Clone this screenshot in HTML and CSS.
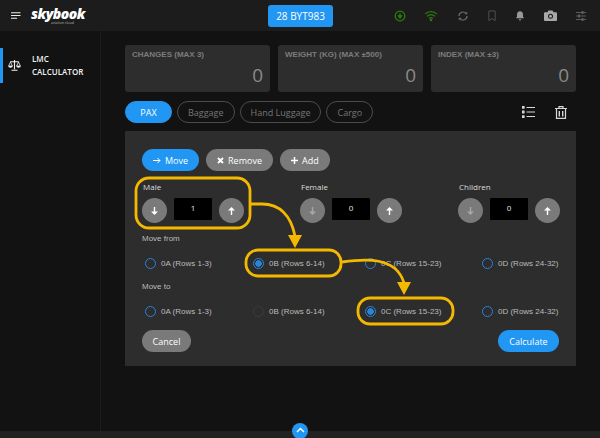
FILE: index.html

```html
<!DOCTYPE html>
<html lang="en">
<head>
    <meta charset="UTF-8">
    <meta name="viewport" content="width=device-width, initial-scale=1.0">
    <title>LMC Calculator - skybook</title>
    <link rel="stylesheet" href="styles.css">
</head>
<body>
    <header class="topbar">
        <div class="brand">
            <svg class="menu-icon" width="10" height="7" viewBox="0 0 10 7"><path d="M0 .75h9.5M0 3.5h9.5M0 6.25h6" stroke="#eee" stroke-width="1.2" fill="none"/></svg>
            <div class="logo">
                <span class="logo-name">skybook</span>
                <span class="logo-sub">aviation cloud</span>
            </div>
        </div>
        <button class="flight-btn">28 BYT983</button>
        <div class="top-icons">
            <svg width="12" height="12" viewBox="0 0 12 12"><circle cx="6" cy="6" r="4.8" fill="none" stroke="#2f7a0c" stroke-width="1.3"/><path d="M6 2.8v4M4 5.6 6 8.6 8 5.6z" stroke="#2f7a0c" fill="#2f7a0c"/></svg>
            <svg width="14" height="12" viewBox="0 0 14 12"><path d="M1 4.2a8.5 8.5 0 0 1 12 0M3 6.4a5.6 5.6 0 0 1 8 0M5 8.4a2.8 2.8 0 0 1 4 0" stroke="#2f7a0c" stroke-width="1.2" fill="none"/><circle cx="7" cy="10" r="1.3" fill="#2f7a0c"/></svg>
            <svg width="12" height="12" viewBox="0 0 12 12"><path d="M2 6a4 4 0 0 1 7-2.6M10 6a4 4 0 0 1-7 2.6" stroke="#6e6e6e" stroke-width="1.2" fill="none"/><path d="M10.2 1.6v2.6H7.6zM1.8 10.4V7.8h2.6z" fill="#6e6e6e"/></svg>
            <svg width="10" height="12" viewBox="0 0 10 12"><path d="M1.8 1h6.4v9.6L5 8.6l-3.2 2z" stroke="#4e4e4e" stroke-width="1" fill="none"/></svg>
            <svg width="10" height="12" viewBox="0 0 10 12"><path d="M5 1.2c2 0 3 1.4 3 3.2v2.4l1 1.4H1l1-1.4V4.4c0-1.800 1-3.200 3-3.200z" fill="#9a9a9a"/><path d="M3.800 9.300h2.400a1.200 1.200 0 0 1-2.400 0z" fill="#9a9a9a"/></svg>
            <svg width="13" height="11" viewBox="0 0 13 11"><path d="M1 2.300h2.500L4.500.6h4l1 1.700H12a1 1 0 0 1 1 1v6.700a1 1 0 0 1-1 1H1a1 1 0 0 1-1-1V3.300a1 1 0 0 1 1-1z" fill="#a8a8a8"/><circle cx="6.500" cy="6.300" r="2.500" fill="#1c1c1c"/><circle cx="6.500" cy="6.300" r="1.500" fill="#a8a8a8"/></svg>
            <svg width="12" height="12" viewBox="0 0 12 12"><path d="M1 2.500h10M1 6h10M1 9.500h10" stroke="#5c5c5c" stroke-width="1.100"/><path d="M6.500 1h2v3h-2zM3 4.500h2v3H3zM6.500 8h2v3h-2z" fill="#5c5c5c"/></svg>
        </div>
    </header>

    <div class="layout">
        <nav class="sidebar">
            <a class="side-item">
                <svg width="13" height="11" viewBox="0 0 13 11"><path d="M6.500 0v9.200M3.500 10.300h6M2.200 1.800h8.600" stroke="#f2f2f2" stroke-width="1.100" fill="none"/><path d="M2.500 2 .6 6h3.800zM10.500 2 8.600 6h3.800z" stroke="#f2f2f2" stroke-width=".8" fill="none"/><path d="M.3 6h4.400a2.200 1.800 0 0 1-4.400 0zM8.300 6h4.400a2.200 1.800 0 0 1-4.400 0z" fill="#f2f2f2"/></svg>
                <span>LMC<br>CALCULATOR</span>
            </a>
        </nav>

        <main class="content">
            <div class="stats">
                <div class="stat-card"><span class="stat-label">CHANGES (MAX 3)</span><span class="stat-value">0</span></div>
                <div class="stat-card"><span class="stat-label">WEIGHT (KG) (MAX ±500)</span><span class="stat-value">0</span></div>
                <div class="stat-card"><span class="stat-label">INDEX (MAX ±3)</span><span class="stat-value">0</span></div>
            </div>

            <div class="tab-row">
                <div class="tabs">
                    <button class="tab active">PAX</button>
                    <button class="tab">Baggage</button>
                    <button class="tab">Hand Luggage</button>
                    <button class="tab">Cargo</button>
                </div>
                <div class="tab-icons">
                    <svg width="13" height="12" viewBox="0 0 13 12"><path d="M4.500 1.500H13M4.500 6H13M4.500 10.500H13" stroke="#d8d8d8" stroke-width="1.200"/><path d="M0 0h2.600v2.800H0zM0 4.600h2.600v2.800H0zM0 9.200h2.600V12H0z" fill="#d8d8d8"/></svg>
                    <svg width="12" height="13" viewBox="0 0 12 13"><path d="M0 2.500h12M4 2.300V.7h4v1.600" stroke="#d8d8d8" stroke-width="1.200" fill="none"/><path d="M1.500 3v9.400h9V3" stroke="#d8d8d8" stroke-width="1.200" fill="none"/><path d="M4.300 5v5.500M7.700 5v5.500" stroke="#d8d8d8" stroke-width="1.400"/></svg>
                </div>
            </div>

            <section class="panel">
                <div class="actions">
                    <button class="pill blue">
                        <svg width="8" height="7" viewBox="0 0 8 7"><path d="M0 3.500h7M4.500 1 7 3.500 4.500 6" stroke="#fff" stroke-width="1" fill="none"/></svg>
                        Move
                    </button>
                    <button class="pill">
                        <svg width="7" height="7" viewBox="0 0 7 7"><path d="M1 1l5 5M6 1 1 6" stroke="#fff" stroke-width="1.800"/></svg>
                        Remove
                    </button>
                    <button class="pill">
                        <svg width="7" height="7" viewBox="0 0 7 7"><path d="M3.500 0v7M0 3.500h7" stroke="#fff" stroke-width="1.500"/></svg>
                        Add
                    </button>
                </div>

                <div class="counters">
                    <div class="counter">
                        <label>Male</label>
                        <div class="counter-row">
                            <button class="round"><svg width="7" height="8" viewBox="0 0 7 8"><path d="M3.500 0v6" stroke="#fff" stroke-width="1.400"/><path d="M0 4.500h7L3.500 8z" fill="#fff"/></svg></button>
                            <span class="count">1</span>
                            <button class="round"><svg width="7" height="8" viewBox="0 0 7 8"><path d="M3.500 8V2" stroke="#fff" stroke-width="1.400"/><path d="M0 3.500h7L3.500 0z" fill="#fff"/></svg></button>
                        </div>
                    </div>
                    <div class="counter">
                        <label>Female</label>
                        <div class="counter-row">
                            <button class="round"><svg width="7" height="8" viewBox="0 0 7 8"><path d="M3.500 0v6" stroke="#a8a8a8" stroke-width="1.400"/><path d="M0 4.500h7L3.500 8z" fill="#a8a8a8"/></svg></button>
                            <span class="count">0</span>
                            <button class="round"><svg width="7" height="8" viewBox="0 0 7 8"><path d="M3.500 8V2" stroke="#fff" stroke-width="1.400"/><path d="M0 3.500h7L3.500 0z" fill="#fff"/></svg></button>
                        </div>
                    </div>
                    <div class="counter">
                        <label>Children</label>
                        <div class="counter-row">
                            <button class="round"><svg width="7" height="8" viewBox="0 0 7 8"><path d="M3.500 0v6" stroke="#a8a8a8" stroke-width="1.400"/><path d="M0 4.500h7L3.500 8z" fill="#a8a8a8"/></svg></button>
                            <span class="count">0</span>
                            <button class="round"><svg width="7" height="8" viewBox="0 0 7 8"><path d="M3.500 8V2" stroke="#fff" stroke-width="1.400"/><path d="M0 3.500h7L3.500 0z" fill="#fff"/></svg></button>
                        </div>
                    </div>
                </div>

                <div class="group-label">Move from</div>
                <div class="radios">
                    <div class="radio"><i></i>0A (Rows 1-3)</div>
                    <div class="radio checked"><i></i>0B (Rows 6-14)</div>
                    <div class="radio"><i></i>0C (Rows 15-23)</div>
                    <div class="radio"><i></i>0D (Rows 24-32)</div>
                </div>

                <div class="group-label">Move to</div>
                <div class="radios">
                    <div class="radio"><i></i>0A (Rows 1-3)</div>
                    <div class="radio disabled"><i></i>0B (Rows 6-14)</div>
                    <div class="radio checked"><i></i>0C (Rows 15-23)</div>
                    <div class="radio"><i></i>0D (Rows 24-32)</div>
                </div>

                <div class="footer-btns">
                    <button class="pill">Cancel</button>
                    <button class="pill blue">Calculate</button>
                </div>
            </section>
        </main>
    </div>

    <div class="bottom-bar">
        <button class="up-btn"><svg width="9" height="6" viewBox="0 0 9 6"><path d="M1 5 4.500 1.500 8 5" stroke="#fff" stroke-width="1.500" fill="none"/></svg></button>
    </div>

    <!-- yellow call-outs drawn over the screenshot -->
    <svg class="callouts" width="600" height="438" viewBox="0 0 600 438">
        <g fill="none" stroke="#f5b800" stroke-width="2.800">
            <rect x="136" y="178" width="114" height="50" rx="13"/>
            <rect x="246" y="250" width="95" height="26" rx="12"/>
            <rect x="358" y="298" width="95" height="26" rx="12"/>
            <path d="M251 204H262C280 204 291 216 295 236"/>
            <path d="M342 262C365 259 396 256 404 283"/>
        </g>
        <path d="M288 235h14l-7 13zM397 282h14l-7 13z" fill="#f5b800"/>
    </svg>
</body>
</html>
```

FILE: styles.css

```css
* {
    margin: 0;
    padding: 0;
    box-sizing: border-box;
}

body {
    position: relative;
    width: 600px;
    height: 438px;
    overflow: hidden;
    display: flex;
    flex-direction: column;
    background: #121212;
    font-family: 'Open Sans', 'Liberation Sans', sans-serif;
    color: #eee;
}

button {
    font-family: inherit;
    border: none;
}

.topbar {
    height: 31px;
    flex: none;
    display: flex;
    align-items: center;
    background: #1c1c1c;
}

.brand {
    width: 268px;
    display: flex;
    align-items: center;
    padding-left: 11px;
}

.menu-icon {
    margin-right: 10px;
}

.logo {
    display: flex;
    flex-direction: column;
    width: 55px;
}

.logo-name {
    font-size: 14px;
    line-height: 15px;
    font-weight: 800;
    font-style: italic;
    letter-spacing: -0.5px;
    color: #fff;
}

.logo-sub {
    margin-left: 20px;
    font-size: 3.5px;
    line-height: 4px;
    white-space: nowrap;
    color: #bbb;
}

.flight-btn {
    width: 65px;
    height: 22px;
    background: #2196f3;
    color: #fff;
    font-size: 10px;
    font-weight: 500;
    border-radius: 3px;
}

.top-icons {
    flex: 1;
    display: flex;
    align-items: center;
    justify-content: space-between;
    padding: 0 13px 0 61px;
}

.layout {
    flex: 1;
    display: flex;
    min-height: 0;
}

.sidebar {
    width: 101px;
    flex: none;
    padding-top: 17px;
    border-right: 1px solid #1c1c1c;
}

.side-item {
    height: 35px;
    display: flex;
    align-items: center;
    gap: 11px;
    padding-left: 5px;
    border-left: 3px solid #2196f3;
    font-size: 8px;
    line-height: 12.5px;
    font-weight: 600;
    color: #f0f0f0;
}

.content {
    flex: 1;
    min-width: 0;
    padding: 14px 24px 0;
}

.stats {
    display: grid;
    grid-template-columns: repeat(3, 145px);
    gap: 8px;
}

.stat-card {
    height: 47px;
    display: flex;
    flex-direction: column;
    justify-content: space-between;
    padding: 5px 7px 5px;
    background: #2d2d2d;
    border-radius: 3px;
}

.stat-label {
    font-family: 'Liberation Sans', sans-serif;
    font-size: 8px;
    font-weight: 700;
    color: #7c7c7c;
}

.stat-value {
    align-self: flex-end;
    font-size: 19px;
    line-height: 24px;
    color: #8a8a8a;
}

.tab-row {
    display: flex;
    justify-content: space-between;
    align-items: center;
    margin-top: 9px;
}

.tabs {
    display: flex;
    gap: 5px;
}

.tab {
    height: 22px;
    padding: 0 10px;
    background: transparent;
    border: 1px solid #4c4c4c;
    border-radius: 11px;
    color: #777;
    font-size: 9px;
    font-weight: 500;
}

.tab.active {
    width: 47px;
    background: #2196f3;
    border-color: #2196f3;
    color: #fff;
}

.tab-icons {
    display: flex;
    align-items: center;
    gap: 20px;
    padding-right: 9px;
}

.panel {
    height: 235px;
    margin-top: 8px;
    padding: 18px 17px 0;
    background: #2d2d2d;
}

.actions {
    display: flex;
    gap: 7px;
}

.pill {
    height: 22px;
    padding: 0 11px;
    display: flex;
    align-items: center;
    justify-content: center;
    gap: 4px;
    background: #7a7a7a;
    color: #fff;
    border-radius: 11px;
    font-size: 9px;
    font-weight: 500;
}

.pill.blue {
    background: #2196f3;
}

.counters {
    display: grid;
    grid-template-columns: 158px 158px 101px;
    margin-top: 10px;
}

.counter label {
    display: block;
    font-size: 8px;
    line-height: 12px;
    color: #ddd;
    margin-left: 1px;
    margin-bottom: 5px;
}

.counter-row {
    display: flex;
    align-items: flex-start;
    gap: 7px;
}

.round {
    width: 25px;
    height: 25px;
    flex: none;
    display: flex;
    align-items: center;
    justify-content: center;
    background: #7a7a7a;
    border-radius: 50%;
}

.count {
    width: 38px;
    height: 22px;
    flex: none;
    background: #000;
    border-radius: 1px;
    font-size: 8px;
    line-height: 20px;
    text-align: center;
    color: #e5e5e5;
}

.group-label {
    font-family: 'Liberation Sans', sans-serif;
    font-size: 8px;
    line-height: 10px;
    color: #bbb;
    margin-top: 11px;
}

.radios + .group-label {
    margin-top: 13px;
}

.radios {
    display: grid;
    grid-template-columns: 108px 112px 117px 1fr;
    margin-top: 13px;
    padding-left: 3px;
}

.radio {
    height: 12px;
    display: flex;
    align-items: center;
    gap: 5px;
    font-family: 'Liberation Sans', sans-serif;
    font-size: 8px;
    white-space: nowrap;
    color: #bbb;
}

.radio i {
    width: 11px;
    height: 11px;
    border: 1.3px solid #2a83d6;
    border-radius: 50%;
    flex: none;
}

.radio.checked i {
    background: radial-gradient(circle, #2a83d6 0 3px, transparent 3.5px);
}

.radio.disabled i {
    border-color: #3c3c3c;
}

.footer-btns {
    display: flex;
    justify-content: space-between;
    margin-top: 13px;
}

.footer-btns .pill {
    width: 49px;
    padding: 0;
}

.footer-btns .pill.blue {
    width: 61px;
}

.bottom-bar {
    height: 7px;
    flex: none;
    display: flex;
    justify-content: center;
    background: #222;
}

.up-btn {
    width: 16px;
    height: 16px;
    margin-top: -8px;
    display: flex;
    align-items: flex-start;
    justify-content: center;
    padding-top: 4px;
    background: #2196f3;
    border-radius: 50%;
}

.callouts {
    position: absolute;
    left: 0;
    top: 0;
    pointer-events: none;
}
```
